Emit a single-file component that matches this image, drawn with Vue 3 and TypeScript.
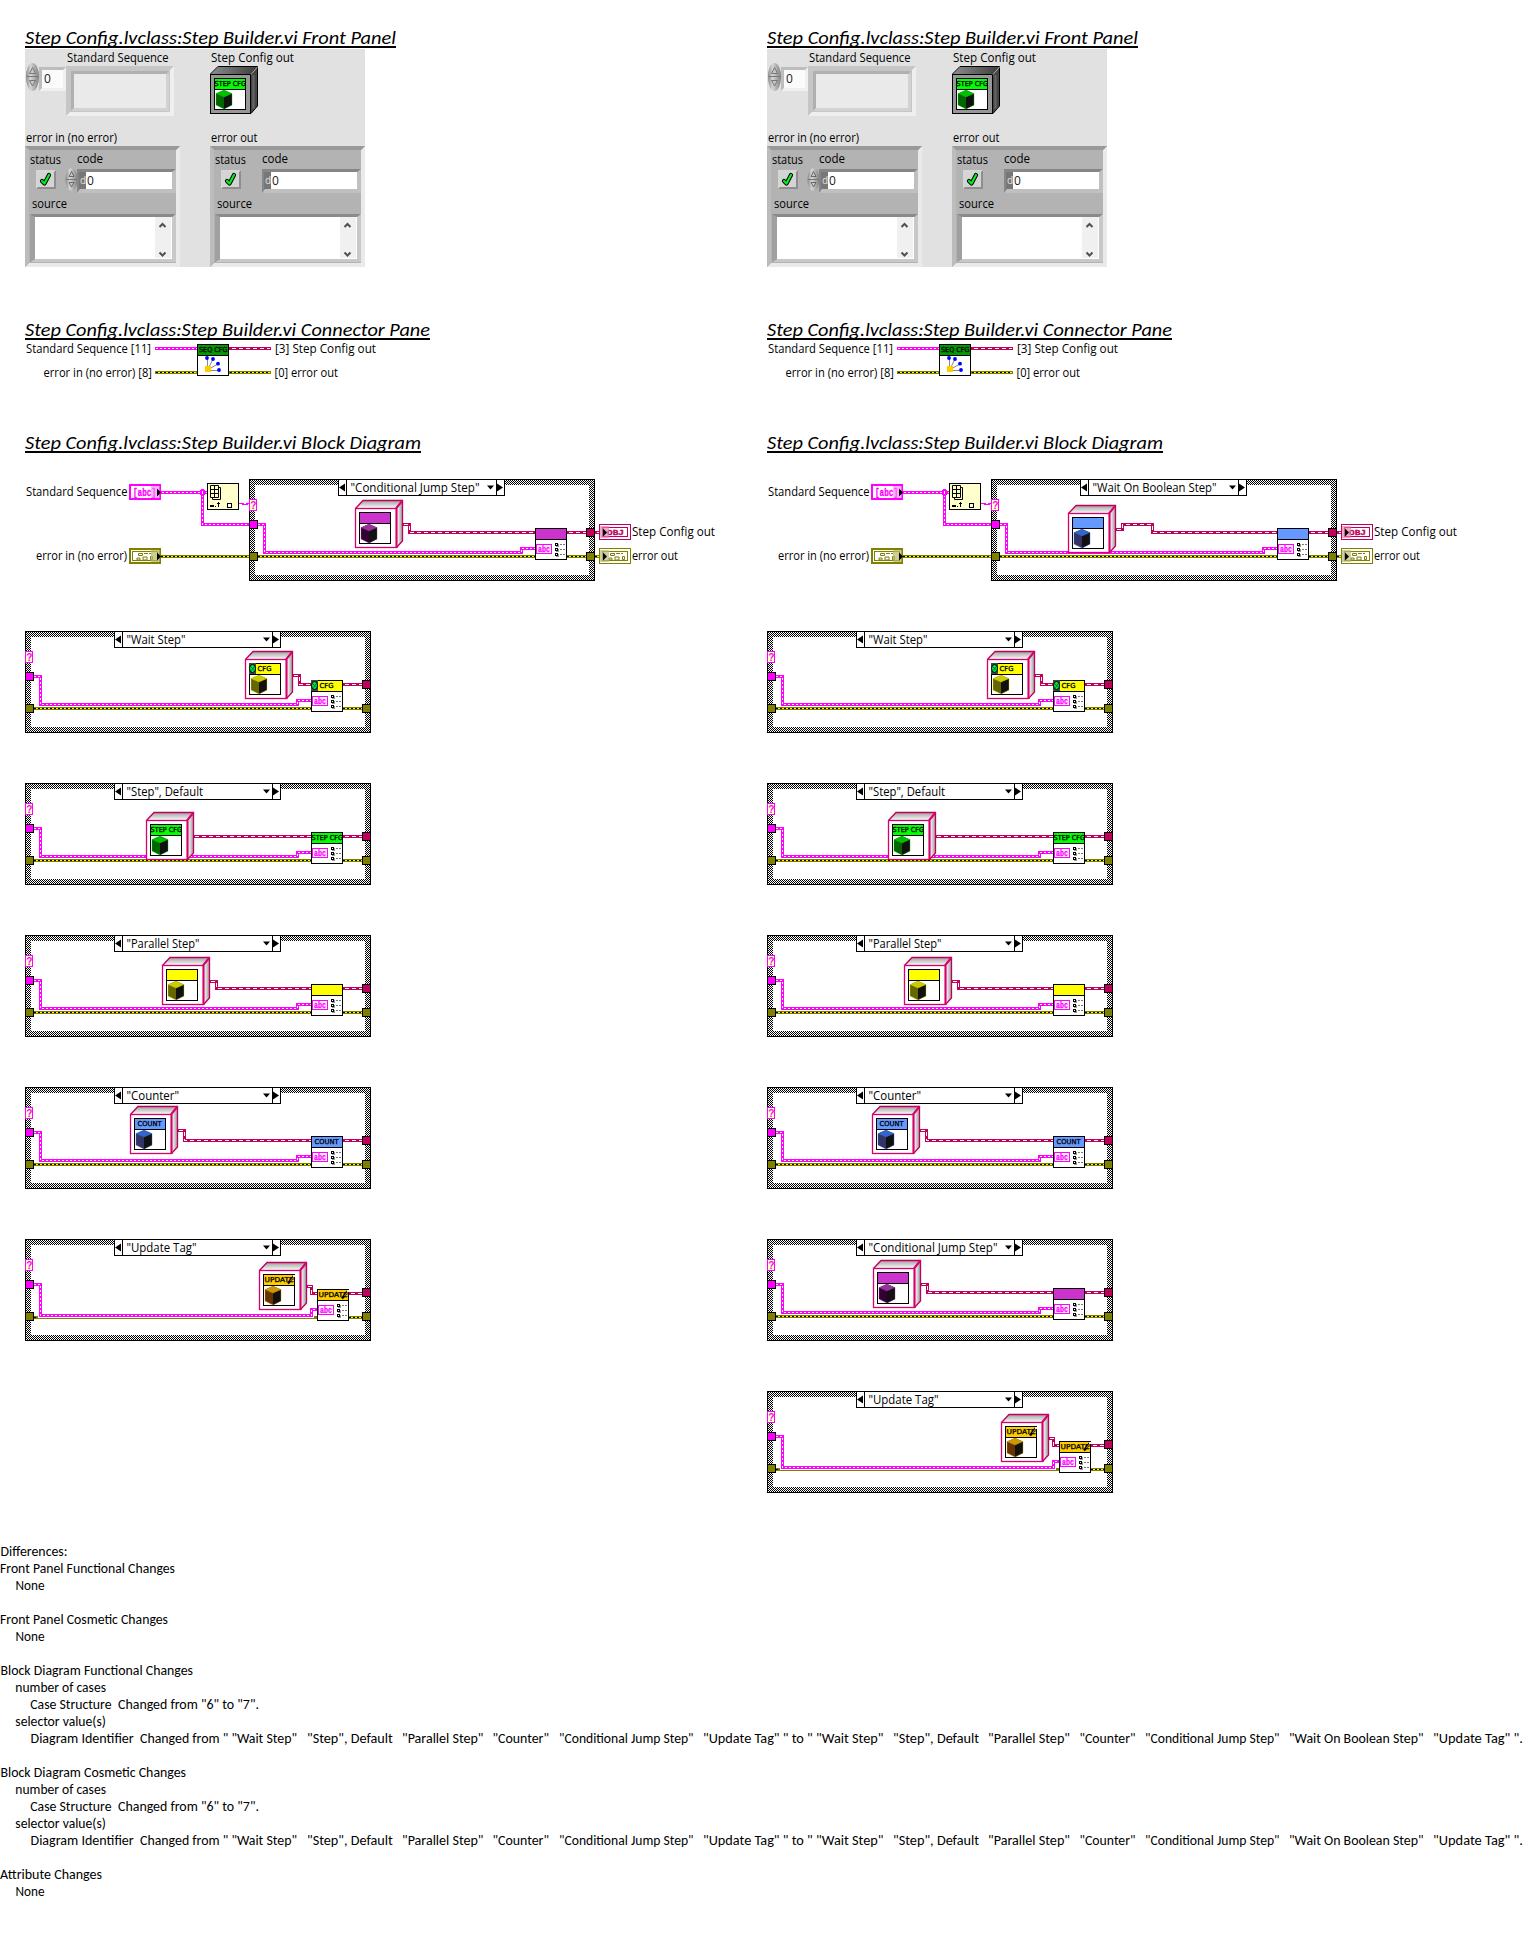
<script setup lang="ts">
interface Label { t: string; x: number; y: number; w: number }
interface CaseFrame {
  name: string
  w: number
  icon: string
  cube: [number, number]
  wire: string
  main?: boolean
  low?: boolean
}
interface Segment { t: string; x: number; e: number }

const icons = [
  { id: 'purple', head: '#cc33cc', top: '#993399', left: '#330033', text: '', x: 0, w: 0 },
  { id: 'sky', head: '#6699ff', top: '#3366cc', left: '#333366', text: '', x: 0, w: 0 },
  { id: 'wait', head: '#ffff00', top: '#cccc00', left: '#666600', text: 'CFG', x: 8.5, w: 14 },
  { id: 'step', head: '#00ff00', top: '#00c000', left: '#006600', text: 'STEP CFG', x: 0.6, w: 31.4 },
  { id: 'parallel', head: '#ffff00', top: '#cccc00', left: '#666600', text: '', x: 0, w: 0 },
  { id: 'count', head: '#6699ff', top: '#3366cc', left: '#333366', text: 'COUNT', x: 3.6, w: 24 },
  { id: 'update', head: '#ffcc00', top: '#cc9900', left: '#663300', text: 'UPDATE', x: 1.6, w: 29 },
]

const jump: CaseFrame = { name: '"Conditional Jump Step"', w: 129, icon: 'purple', cube: [106, 21], wire: 'M154 45.5H160.5V53.5H286' }
const boolWait: CaseFrame = { name: '"Wait On Boolean Step"', w: 124, icon: 'sky', cube: [77, 26], wire: 'M125 50.5H131.5V45.5H161.5V53.5H286' }
const wait: CaseFrame = { name: '"Wait Step"', w: 59, icon: 'wait', cube: [220, 20], wire: 'M268 44.5H274.5V53.5H286' }
const step: CaseFrame = { name: '"Step", Default', w: 76.5, icon: 'step', cube: [121, 29], wire: 'M169 53.5H286' }
const parallel: CaseFrame = { name: '"Parallel Step"', w: 73, icon: 'parallel', cube: [137, 22], wire: 'M185 46.5H191.5V53.5H286' }
const counter: CaseFrame = { name: '"Counter"', w: 52.5, icon: 'count', cube: [105, 19], wire: 'M153 43.5H159.5V53.5H286' }
const update: CaseFrame = { name: '"Update Tag"', w: 70, icon: 'update', cube: [234, 23], wire: 'M282 47.5H286.5V54.5H292', low: true }

const columns: CaseFrame[][] = [
  [{ ...jump, main: true }, wait, step, parallel, counter, update],
  [{ ...boolWait, main: true }, wait, step, parallel, counter, jump, update],
]

const heads = [
  { t: 'Step Config.lvclass:Step Builder.vi Front Panel', w: 371 },
  { t: 'Step Config.lvclass:Step Builder.vi Connector Pane', w: 405 },
  { t: 'Step Config.lvclass:Step Builder.vi Block Diagram', w: 396 },
]

const panelLabels: Label[] = [
  { t: 'Standard Sequence', x: 42, y: 13, w: 101.5 },
  { t: 'Step Config out', x: 186, y: 13, w: 83 },
  { t: 'error in (no error)', x: 1, y: 93, w: 91 },
  { t: 'error out', x: 186, y: 93, w: 46.5 },
]
const clusterLabels: Label[] = [
  { t: 'status', x: 5, y: 115, w: 31 },
  { t: 'code', x: 52, y: 114, w: 26 },
  { t: 'source', x: 7, y: 159, w: 35 },
]
const connLabels: Label[] = [
  { t: 'Standard Sequence [11]', x: 1, y: 13, w: 125 },
  { t: '[3] Step Config out', x: 250, y: 13, w: 101 },
  { t: 'error in (no error) [8]', x: 18.5, y: 37, w: 108.5 },
  { t: '[0] error out', x: 249.5, y: 37, w: 63.5 },
]
const mainLabels: Label[] = [
  { t: 'Standard Sequence', x: 1, y: 17, w: 101.5 },
  { t: 'error in (no error)', x: 11, y: 81, w: 91 },
  { t: 'Step Config out', x: 607, y: 57, w: 83 },
  { t: 'error out', x: 607, y: 81, w: 46 },
]

const none: Segment[] = [{ t: 'None', x: 15.5, e: 44.5 }]
const detail: Segment[][] = [
  [{ t: 'number of cases', x: 15.3, e: 106 }],
  [{ t: 'Case Structure', x: 30.3, e: 111.5 }, { t: 'Changed from "6" to "7".', x: 118, e: 259 }],
  [{ t: 'selector value(s)', x: 15.3, e: 106 }],
  [
    { t: 'Diagram Identifier', x: 30.5, e: 133.7 },
    { t: 'Changed from " "Wait Step"', x: 140, e: 297 },
    { t: '"Step", Default', x: 307, e: 392.7 },
    { t: '"Parallel Step"', x: 402, e: 483.5 },
    { t: '"Counter"', x: 492.5, e: 549 },
    { t: '"Conditional Jump Step"', x: 559, e: 693.5 },
    { t: '"Update Tag" " to " "Wait Step"', x: 703, e: 883.5 },
    { t: '"Step", Default', x: 893, e: 979 },
    { t: '"Parallel Step"', x: 988, e: 1070 },
    { t: '"Counter"', x: 1079.5, e: 1135.5 },
    { t: '"Conditional Jump Step"', x: 1145, e: 1279.5 },
    { t: '"Wait On Boolean Step"', x: 1289, e: 1423.5 },
    { t: '"Update Tag" ".', x: 1433, e: 1523 },
  ],
]
const report: Segment[][] = [
  [{ t: 'Differences:', x: 0.5, e: 67.5 }],
  [{ t: 'Front Panel Functional Changes', x: 0, e: 175 }],
  none,
  [],
  [{ t: 'Front Panel Cosmetic Changes', x: 0, e: 168 }],
  none,
  [],
  [{ t: 'Block Diagram Functional Changes', x: 0.5, e: 193 }],
  ...detail,
  [],
  [{ t: 'Block Diagram Cosmetic Changes', x: 0.5, e: 186 }],
  ...detail,
  [],
  [{ t: 'Attribute Changes', x: 0, e: 102 }],
  none,
]

const strIn = (c: CaseFrame) => c.low
  ? 'M9 45.5H15.5V76.5H286.5V70.5H292'
  : 'M9 45.5H15.5V73.5H272.5V69.5H286'
const nodeAt = (c: CaseFrame) => (c.low ? [292, 50] : [286, 49])
</script>

<template>
  <div class="page">
    <svg class="defs" width="0" height="0">
      <defs>
        <pattern id="hatch" width="2" height="2" patternUnits="userSpaceOnUse">
          <rect width="2" height="2" fill="#fff" />
          <path d="M0 0h1v1h-1zM1 1h1v1h-1z" fill="#000" />
        </pattern>
        <linearGradient id="gTop" x1="0" y1="0" x2="0" y2="1">
          <stop offset="0" stop-color="#a0a0a0" /><stop offset="1" stop-color="#fff" />
        </linearGradient>
        <linearGradient id="gSide" x1="0" y1="0" x2="1" y2="0">
          <stop offset="0" stop-color="#fff" /><stop offset="1" stop-color="#999" />
        </linearGradient>
        <linearGradient id="gDark" x1="0" y1="0" x2="1" y2="0">
          <stop offset="0" stop-color="#8c8c8c" /><stop offset="1" stop-color="#3c3c3c" />
        </linearGradient>
        <linearGradient id="gSpin" x1="0" y1="0" x2="1" y2="0">
          <stop offset="0" stop-color="#888" /><stop offset=".35" stop-color="#d6d6d6" /><stop offset="1" stop-color="#808080" />
        </linearGradient>
        <symbol v-for="k in icons" :id="'head-' + k.id" :key="k.id" viewBox="0 0 32 32" width="32" height="32">
          <rect width="32" height="32" fill="#000" />
          <rect x="1" y="1" width="30" height="10" :fill="k.head" />
          <rect x="1" y="12" width="30" height="19" fill="#fff" />
          <text v-if="k.text" class="px" :x="k.x" y="8.2" :textLength="k.w" lengthAdjust="spacingAndGlyphs">{{ k.text }}</text>
          <g v-if="k.id === 'wait'">
            <rect width="7" height="11" fill="#444" />
            <ellipse cx="3.5" cy="5.5" rx="3" ry="4" fill="#00e640" stroke="#000" />
            <path d="M2 4L4.5 6.5M2.5 7.5L5 4" stroke="#063" fill="none" />
          </g>
          <g v-if="k.id === 'update'">
            <path d="M25 9.500L31 2" stroke="#000" stroke-width="2.400" />
            <path d="M27.500 7L31 2.500" stroke="#a08040" stroke-width="1.200" />
            <path d="M30 1h2v2h-2z" fill="#fff0c0" />
          </g>
        </symbol>
        <symbol v-for="k in icons" :id="'cls-' + k.id" :key="k.id" viewBox="0 0 32 32" width="32" height="32">
          <use :href="'#head-' + k.id" />
          <path d="M10 12L18 15.5V27L10 31L2 27V15.5Z" :fill="k.left" />
          <path d="M10 19L18 15.5V27L10 31Z" fill="#111" />
          <path d="M10 12L18 15.5L10 19L2 15.5Z" :fill="k.top" />
          <path d="M10 19L18 15.5V27L10 31L2 27V15.5Z" fill="none" :stroke="k.top" stroke-width=".7" opacity=".55" />
        </symbol>
        <symbol v-for="k in icons" :id="'node-' + k.id" :key="k.id" viewBox="0 0 32 32" width="32" height="32">
          <use :href="'#head-' + k.id" />
          <rect x="1.500" y="16.500" width="15" height="9" fill="#fff" stroke="#f0f" />
          <text class="abc" x="3" y="24" textLength="12" lengthAdjust="spacingAndGlyphs">abc</text>
          <g v-for="y in [15, 20, 25]" :key="y">
            <rect x="21" :y="y + 1" width="3" height="3" fill="#999" />
            <rect x="20.500" :y="y + 0.5" width="2" height="2" fill="#fff" stroke="#000" />
            <path :d="`M25 ${y + 1.5}H31`" stroke="#777" stroke-dasharray="2 1" />
          </g>
        </symbol>
        <symbol id="errGlyph" viewBox="0 0 32 16" width="32" height="16">
          <path d="M9.500 5.500h4v2h-4zM15 5.500h4M8 10h3v2h-3zM14 9h4v3h-4zM21.500 8.500h2v3h-2zM20 5.500h2" fill="none" stroke="#808000" />
        </symbol>
      </defs>
    </svg>

    <main class="columns">
      <section v-for="(cases, ci) in columns" :key="ci" class="column">
        <svg class="heading first" width="440" height="23">
          <text class="title" x="0" y="19" :textLength="heads[0].w" lengthAdjust="spacingAndGlyphs">{{ heads[0].t }}</text>
          <rect y="21" :width="heads[0].w" height="2" />
        </svg>

        <svg class="panel" width="340" height="218">
          <rect width="340" height="218" fill="#e1e1e1" />
          <text v-for="l in panelLabels" :key="l.t" class="ui" :x="l.x" :y="l.y" :textLength="l.w" lengthAdjust="spacingAndGlyphs">{{ l.t }}</text>
          <!-- array index -->
          <rect x="14" y="18" width="27" height="24" fill="#f0f0f0" />
          <path d="M14 42V18H41L38 21H17V39Z" fill="#bdbdbd" />
          <rect x="17" y="21" width="21" height="18" fill="#fbfbfb" />
          <text class="ui num" x="19" y="34">0</text>
          <ellipse cx="7.500" cy="28" rx="6.500" ry="14" fill="url(#gSpin)" />
          <path d="M1.500 27.500H13.500" stroke="#777" />
          <path d="M4.500 24.500L7.500 18.500L10.500 24.500ZM4.500 31.500H10.500L7.500 37Z" fill="#c4c4c4" stroke="#666" stroke-width=".8" />
          <!-- array element -->
          <rect x="41" y="17" width="108" height="50" fill="#efefef" />
          <path d="M41 67V17H149L145 21V63H45Z" fill="#c6c6c6" />
          <path d="M46 62V22H144L141 25H49V59Z" fill="#b0b0b0" />
          <path d="M141 25H144V62H46L49 59H141Z" fill="#d2d2d2" />
          <rect x="49" y="25" width="92" height="34" fill="#eaeaea" />
          <!-- class object -->
          <path d="M193 17.500H232.500V57L226 64.500H185.500V25Z" fill="#444" stroke="#000" />
          <path d="M193 18H232L225 25H186Z" fill="url(#gDark)" />
          <rect x="185.500" y="25.500" width="40" height="39" fill="#979797" stroke="#000" />
          <path d="M226 25.500L232.500 18" stroke="#aaa" />
          <path d="M228.500 26V60" stroke="#666" stroke-width="2" />
          <use href="#cls-step" x="189" y="29" />
          <!-- error clusters -->
          <g v-for="k in [0, 1]" :key="k" :transform="`translate(${k * 185},0)`">
            <rect y="97" width="155" height="121" fill="#eaeaea" />
            <path d="M0 218V97H155L151 101V213H5Z" fill="#a6a6a6" />
            <path d="M0 97H155L151 101H4Z" fill="#999" />
            <path d="M0 97L4 101V214L0 218Z" fill="#bcbcbc" />
            <rect x="4" y="101" width="147" height="113" fill="#b3b3b3" />
            <text v-for="l in clusterLabels" :key="l.t" class="ui" :x="l.x" :y="l.y" :textLength="l.w" lengthAdjust="spacingAndGlyphs">{{ l.t }}</text>
            <rect x="11" y="121" width="20" height="19" fill="#8e8e8e" />
            <path d="M11 140V121H31L29 123H13V138Z" fill="#d6d6d6" />
            <rect x="13" y="123" width="16" height="15" fill="#d4d4d4" />
            <path d="M17 132L19.500 134.500L24 126" stroke="#000" stroke-width="4.200" fill="none" stroke-linejoin="round" stroke-linecap="round" />
            <path d="M17 132L19.500 134.500L24 126" stroke="#00f020" stroke-width="2.200" fill="none" stroke-linejoin="round" stroke-linecap="round" />
            <g v-if="k === 0">
              <ellipse cx="46.500" cy="130.500" rx="6" ry="11.500" fill="url(#gSpin)" />
              <path d="M41 130.500H52" stroke="#777" />
              <path d="M44 127.500L46.500 122.500L49 127.500ZM44 133.500H49L46.500 138Z" fill="#c4c4c4" stroke="#555" stroke-width=".8" />
            </g>
            <rect x="52" y="120" width="99" height="24" fill="#c0c0c0" />
            <path d="M52 144V120H151L147 123H61L55 140Z" fill="#868686" />
            <rect x="54" y="123" width="7" height="17" fill="#777" />
            <rect x="61" y="123" width="86" height="17" fill="#fff" />
            <text class="ui radix" x="55" y="135">d</text>
            <text class="ui num" x="62" y="136">0</text>
            <rect x="5" y="165" width="146" height="48" fill="#c8c8c8" />
            <path d="M5 213V165H151L147 168H10V210Z" fill="#8a8a8a" />
            <path d="M5 165V213L10 210V168Z" fill="#a0a0a0" />
            <rect x="10" y="168" width="137" height="42" fill="#fff" />
            <rect x="130" y="168" width="16" height="41" fill="#f0f0f0" />
            <path d="M134.500 178L137.500 175L140.500 178M134.500 203.500L137.500 206.500L140.500 203.500" fill="none" stroke="#505050" stroke-width="2" />
          </g>
        </svg>

        <svg class="heading second" width="440" height="23">
          <text class="title" x="0" y="19" :textLength="heads[1].w" lengthAdjust="spacingAndGlyphs">{{ heads[1].t }}</text>
          <rect y="21" :width="heads[1].w" height="2" />
        </svg>

        <svg class="connector" width="440" height="44">
          <text v-for="l in connLabels" :key="l.t" class="ui" :x="l.x" :y="l.y" :textLength="l.w" lengthAdjust="spacingAndGlyphs">{{ l.t }}</text>
          <path class="w str" d="M130 8.500H172" /><path class="w strIn" d="M131 8.500H172" />
          <path class="w obj" d="M204 8.500H246" /><path class="w objIn" d="M206 8.500H245" />
          <path class="w err" d="M130 32.500H172M204 32.500H246" />
          <path class="w errY" d="M131 32.500H171M205 32.500H245" /><path class="w errIn" d="M131 32.500H171M205 32.500H245" />
          <rect x="172" y="4" width="32" height="32" />
          <rect x="173" y="5" width="30" height="10" fill="#009900" />
          <rect x="173" y="16" width="30" height="19" fill="#fff" />
          <text class="px" x="174" y="12.300" textLength="28.500" lengthAdjust="spacingAndGlyphs">SEQ CFG</text>
          <path d="M182.500 18V29M188 19L183 29M193 24L184 29M194 30.500H184" stroke="#888" fill="none" />
          <rect x="180" y="26" width="6" height="6" fill="#ffcc00" />
          <circle v-for="p in [[182, 18], [188, 19], [193, 23.7], [194, 30]]" :key="p[0]" :cx="p[0]" :cy="p[1]" r="1.900" fill="#0000ff" />
        </svg>

        <svg class="heading third" width="440" height="23">
          <text class="title" x="0" y="19" :textLength="heads[2].w" lengthAdjust="spacingAndGlyphs">{{ heads[2].t }}</text>
          <rect y="21" :width="heads[2].w" height="2" />
        </svg>

        <div class="cases">
          <svg v-for="(c, i) in cases" :key="i" :width="c.main ? 720 : 346" height="102">
            <g v-if="c.main">
              <text v-for="l in mainLabels" :key="l.t" class="ui" :x="l.x" :y="l.y" :textLength="l.w" lengthAdjust="spacingAndGlyphs">{{ l.t }}</text>
              <rect x="105" y="6" width="30" height="14" fill="#fff" stroke="#f0f" stroke-width="2" />
              <text class="abc big" x="108" y="16.500" textLength="23" lengthAdjust="spacingAndGlyphs">[abc]</text>
              <rect x="126" y="7" width="9" height="12" fill="#ff80ff" opacity=".6" />
              <path d="M132 9.500V17.500L136 13.500Z" />
              <path class="w str" d="M136 13.500H182M177.500 13.500V45.500H224" />
              <path class="w strIn" d="M137 13.500H182M177.500 15.500V45.500H224" />
              <path d="M176 10h3v1h1v5h-1v1h-3v-1h-1v-5h1z" fill="#f0f" />
              <rect x="177" y="12" width="1" height="3" fill="#fff" />
              <rect x="182.500" y="4.500" width="31" height="26" fill="#ffffcc" stroke="#000" />
              <path d="M187.500 8.500h8v12h-8z" fill="#ffffcc" stroke="#000" />
              <path d="M185.500 6.500h8v12h-8zM185.500 10.500h8M185.500 14.500h8M189.500 6.500v12" fill="#ffffcc" stroke="#000" />
              <path d="M185 26h4v2h-4zM190 27h1v1h-1zM192 24h3v1h-3zM193 23h1v5h-1z" />
              <rect x="202.500" y="24.500" width="4" height="4" fill="#fff" stroke="#000" />
              <path class="w" d="M214 24.500h4v1h4v-1h2" stroke="#f0f" stroke-width="1.500" />
              <rect x="105" y="70" width="30" height="14" fill="#fff" stroke="#808000" stroke-width="2" />
              <rect x="107.500" y="72.500" width="25" height="9" fill="none" stroke="#808000" />
              <use href="#errGlyph" x="104" y="69" />
              <rect x="126" y="71" width="9" height="12" fill="#b8b860" opacity=".7" />
              <path d="M132 73.500V81.500L136 77.500Z" />
              <path class="w err" d="M136 77.500H224M570 77.500H574" /><path class="w errY" d="M136 77.500H224M570 77.500H574" /><path class="w errIn" d="M136 77.500H224M570 77.500H574" />
              <path class="w obj" d="M570 53.500H574" />
              <path class="w objIn" d="M571 53.500H574" />
              <rect x="574.500" y="45.500" width="31" height="15" fill="#fff" stroke="#c0005c" />
              <rect x="577.500" y="48.500" width="25" height="9" fill="#fff" stroke="#c0005c" />
              <text class="obj-t" x="582" y="56.200" textLength="17" lengthAdjust="spacingAndGlyphs">OBJ</text>
              <rect x="575" y="47" width="9" height="12" fill="#e080ae" opacity=".65" />
              <path d="M578 49.500V57.500L582 53.500Z" />
              <rect x="574.500" y="69.500" width="31" height="15" fill="#fff" stroke="#808000" />
              <rect x="577.500" y="72.500" width="25" height="9" fill="#fff" stroke="#808000" />
              <use href="#errGlyph" x="576" y="69" />
              <rect x="575" y="71" width="9" height="12" fill="#b8b880" opacity=".7" />
              <path d="M578 73.500V81.500L582 77.500Z" />
            </g>
            <g :transform="`translate(${c.main ? 224 : 0},0)`">
              <rect width="346" height="102" />
              <rect x="1" y="1" width="344" height="100" fill="url(#hatch)" shape-rendering="crispEdges" />
              <rect x="6" y="6" width="334" height="90" fill="#fff" />
              <!-- selector -->
              <rect x="89.500" y=".5" width="166" height="16" fill="#fff" stroke="#000" />
              <path d="M97 0h1v17h-1zM247 0h1v17h-1zM90 8.500L96 4.500V12.500ZM254 8.500L248 4.500V12.500ZM238 6.500H245L241.500 10.500Z" />
              <text class="ui" x="101.500" y="13" :textLength="c.w" lengthAdjust="spacingAndGlyphs">{{ c.name }}</text>
              <!-- wires -->
              <template v-if="c.low">
                <path class="w err" d="M9 78.500H13M289 78.500H292M324 78.500H337" />
                <path class="w errY" d="M324 78.500H337" />
                <path class="w errIn" d="M9 78.500H13M324 78.500H337" />
                <path class="w" d="M12 79.500H290" stroke="#808000" stroke-width="1" />
              </template>
              <template v-else>
                <path class="w err" d="M9 77.500H286M318 77.500H337" />
                <path class="w errY" d="M9 77.500H286M318 77.500H337" />
                <path class="w errIn" d="M9 77.500H286M318 77.500H337" />
              </template>
              <path class="w str" :d="strIn(c)" /><path class="w strIn" :d="strIn(c)" />
              <path class="w obj" :d="c.wire" /><path class="w objIn" :d="c.wire" />
              <path class="w obj" :d="c.low ? 'M324 54.500H337' : 'M318 53.500H337'" />
              <path class="w objIn" :d="c.low ? 'M325 54.500H337' : 'M319 53.500H337'" />
              <!-- tunnels -->
              <rect x=".5" y="20.500" width="7" height="11" fill="#ffffcc" stroke="#f0f" />
              <text class="q" x="1.200" y="29.600">?</text>
              <rect x=".5" y="41.500" width="8" height="8" fill="#f0f" stroke="#000" />
              <rect x=".5" y="73.500" width="8" height="8" fill="#808000" stroke="#000" />
              <rect x="337.500" y="49.500" width="8" height="8" fill="#c0005c" stroke="#000" />
              <rect x="337.500" y="73.500" width="8" height="8" fill="#808000" stroke="#000" />
              <!-- class constant -->
              <g :transform="`translate(${c.cube[0]},${c.cube[1]})`">
                <path d="M8 .5H47.500L41.500 8.500H.5Z" fill="url(#gTop)" />
                <path d="M47.500 .5V41L42 47.500V8Z" fill="url(#gSide)" />
                <path d="M.5 8.500L8 .500H47.500V41L41.500 47.500" fill="none" stroke="#c0005c" stroke-width="1.300" />
                <rect x=".5" y="8.500" width="41" height="39" fill="#fff" stroke="#d8006c" stroke-width="1.300" />
                <path d="M41.500 8V48M41 8.500L47.500 .500" stroke="#d8006c" stroke-width="2" />
                <use :href="'#cls-' + c.icon" x="4" y="12" />
              </g>
              <use :href="'#node-' + c.icon" :x="nodeAt(c)[0]" :y="nodeAt(c)[1]" />
            </g>
          </svg>
        </div>
      </section>
    </main>

    <footer class="report">
      <svg v-for="(line, i) in report" :key="i" width="1524" height="17">
        <text v-for="s in line" :key="s.x" class="cal" :x="s.x" y="13" :textLength="s.e - s.x" lengthAdjust="spacingAndGlyphs">{{ s.t }}</text>
      </svg>
    </footer>
  </div>
</template>

<style>
body { margin: 0; background: #fff; }
</style>

<style scoped>
.page { width: 1524px; height: 1934px; overflow: hidden; background: #fff; }
.page svg { display: block; flex: none; }
.page .defs { position: absolute; }
.columns { display: flex; box-sizing: border-box; height: 1543px; padding: 25px 0 0 25px; }
.column { display: flex; flex-direction: column; flex: none; width: 742px; }
.heading { overflow: visible; }
.panel { margin-top: 1px; }
.second { margin-top: 50px; }
.third { margin-top: 46px; }
.cases { display: flex; flex-direction: column; gap: 50px; margin-top: 26px; }
.report { display: flex; flex-direction: column; }
.title { font: italic 17.8px Calibri, Carlito, Lato, sans-serif; }
.cal { font: 13.3px Calibri, Carlito, Lato, sans-serif; }
.ui { font: 12px "Segoe UI", "Open Sans", "Noto Sans", sans-serif; }
.num { fill: #222; }
.radix { font-size: 10px; fill: #e0e0e0; }
.px { font: 6.8px "DejaVu Sans", sans-serif; stroke: #000; stroke-width: .3px; }
.abc { font: bold 9px "Liberation Mono", monospace; fill: #f0f; stroke: #f0f; stroke-width: .3px; }
.big { font-size: 10px; }
.obj-t { font: bold 8px "Liberation Mono", monospace; fill: #c0005c; stroke: #c0005c; stroke-width: .3px; }
.q { font: bold 10px "Liberation Sans", sans-serif; fill: #f0f; }
.w { fill: none; shape-rendering: crispEdges; }
.str { stroke: #f0f; stroke-width: 3; }
.strIn { stroke: #fff; stroke-width: 1; stroke-dasharray: 2 2; }
.obj { stroke: #c0005c; stroke-width: 3; }
.objIn { stroke: #fff; stroke-width: 1; stroke-dasharray: 4 3; stroke-dashoffset: -1; }
.err { stroke: #808000; stroke-width: 3; }
.errY { stroke: #ff0; stroke-width: 1; }
.errIn { stroke: #000; stroke-width: 1; stroke-dasharray: 2 2; }
</style>
